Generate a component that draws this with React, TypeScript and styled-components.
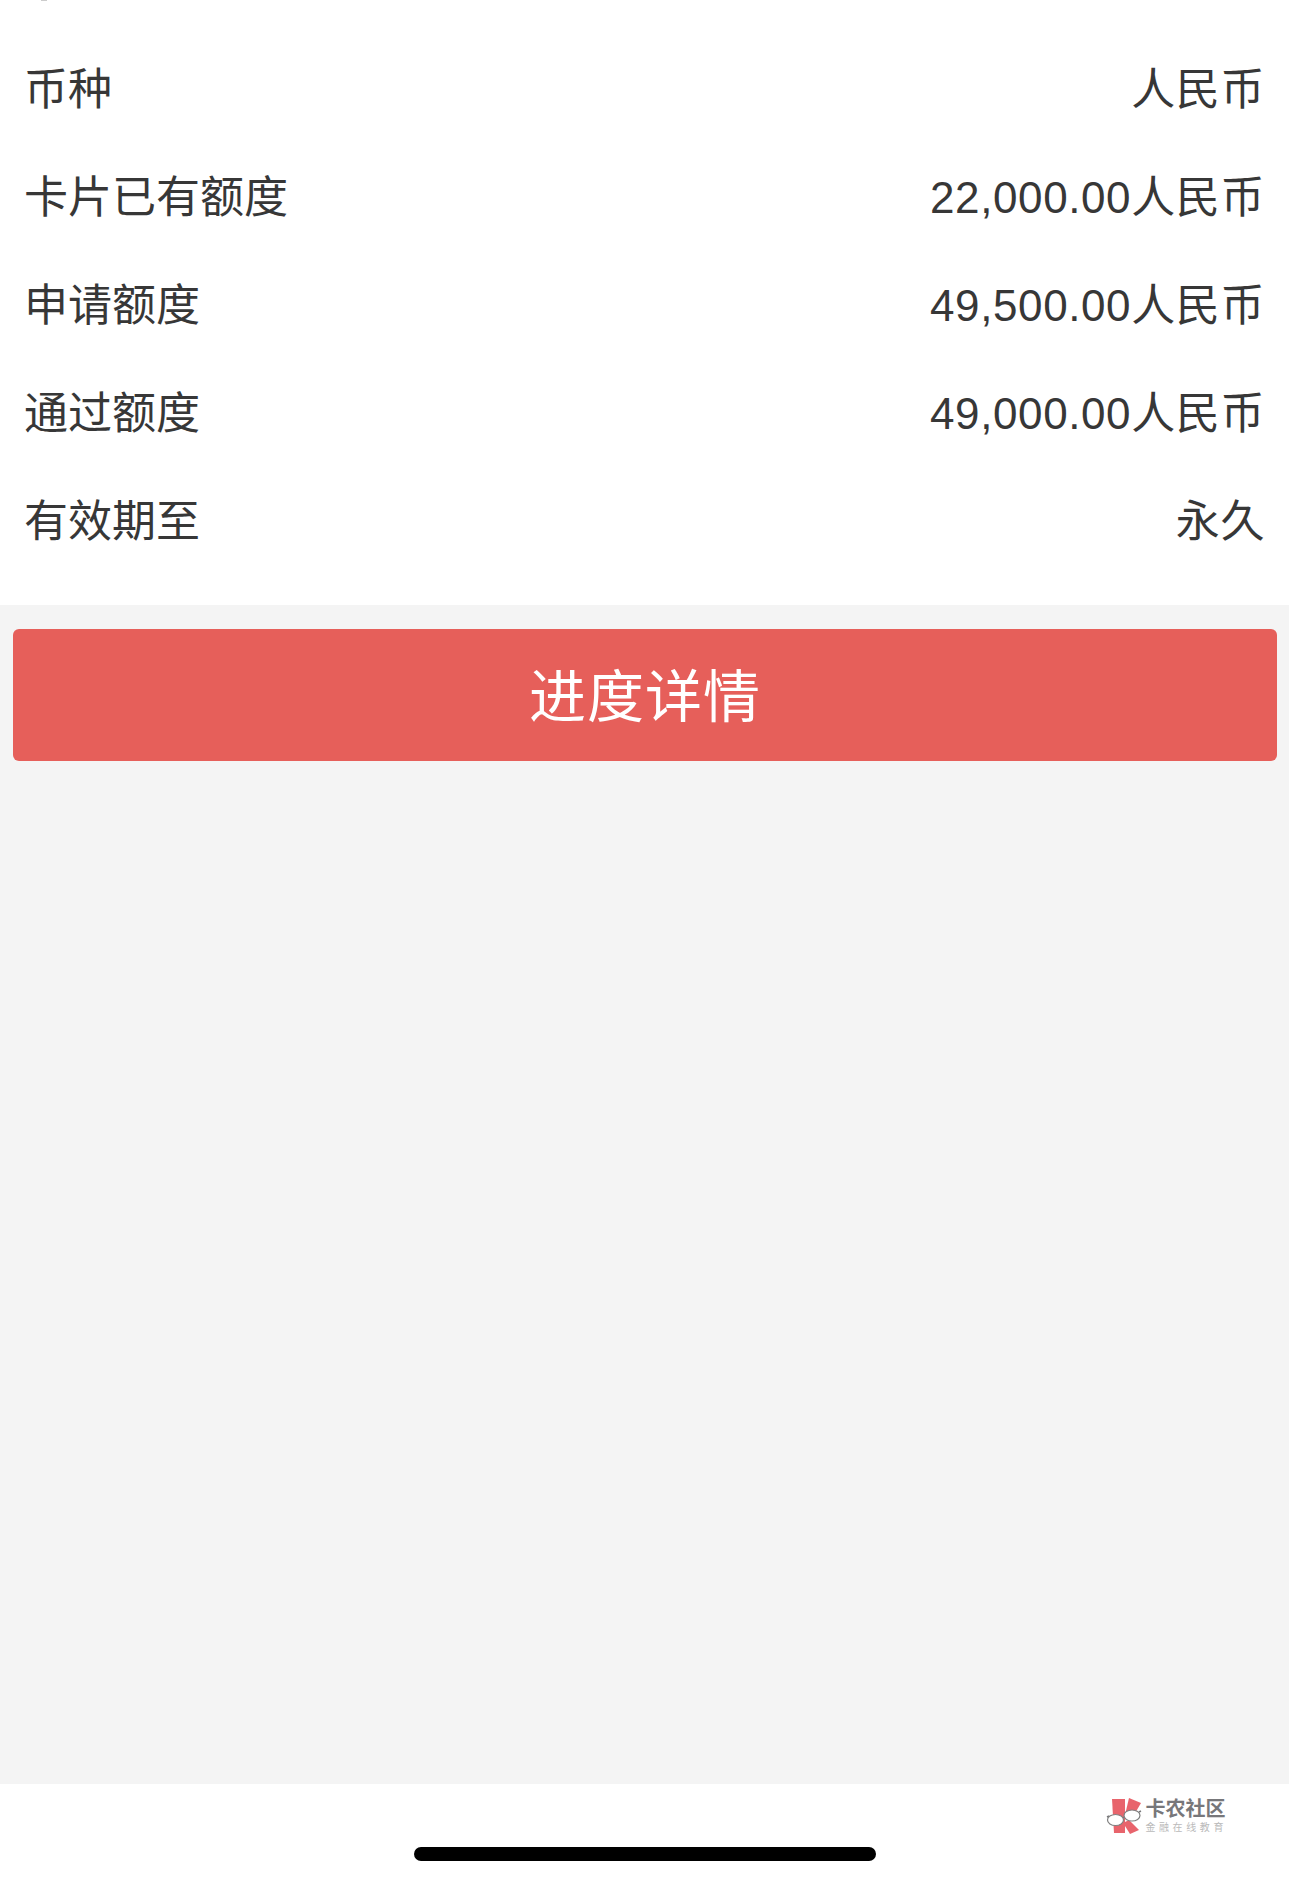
import React from "react";
import styled, { createGlobalStyle } from "styled-components";

const GlobalStyle = createGlobalStyle`
  html, body {
    margin: 0;
    padding: 0;
    background: #f4f4f4;
  }
  * {
    box-sizing: border-box;
  }
`;

const Page = styled.div`
  position: relative;
  width: 1289px;
  height: 1886px;
  display: flex;
  flex-direction: column;
  overflow: hidden;
  font-family: "Liberation Sans", "Noto Sans CJK SC", sans-serif;
`;

// tail of the row that was cut off by the top of the screenshot
const CutOffTail = styled.span`
  position: absolute;
  top: 0;
  left: 41px;
  width: 6px;
  height: 1px;
  background: #cccccc;
`;

const InfoCard = styled.section`
  height: 605px;
  padding: 32px 24px 0 24px;
  background: #ffffff;
`;

const InfoRow = styled.div`
  height: 108px;
  display: flex;
  justify-content: space-between;
  align-items: center;
  font-size: 44px;
  color: #373737;
`;

const Amount = styled.span`
  letter-spacing: 0.6px;
`;

const Body = styled.main`
  flex: 1;
  padding: 24px 12px 0 13px;
  background: #f4f4f4;
`;

const DetailButton = styled.button`
  width: 100%;
  height: 132px;
  padding: 0 0 6px;
  border: 0;
  border-radius: 6px;
  background: #e65f5a;
  color: #ffffff;
  font-family: inherit;
  font-size: 57px;
  letter-spacing: 1px;
`;

const Footer = styled.footer`
  height: 102px;
  display: flex;
  flex-direction: column;
  align-items: center;
  padding-top: 14px;
  background: #ffffff;
`;

const Watermark = styled.div`
  align-self: flex-end;
  display: flex;
  align-items: center;
  gap: 3px;
  margin-right: 62px;
`;

const WatermarkText = styled.div`
  display: flex;
  flex-direction: column;
  gap: 2px;
`;

const WatermarkTitle = styled.span`
  font-size: 20px;
  line-height: 21px;
  font-weight: 700;
  color: #77777a;
`;

const WatermarkSub = styled.span`
  font-size: 10px;
  line-height: 11px;
  letter-spacing: 3.6px;
  color: #bababa;
`;

const HomeIndicator = styled.div`
  width: 462px;
  height: 14px;
  margin-top: 13px;
  border-radius: 7px;
  background: #000000;
`;

const LogoMark = () => (
  <svg width="36" height="36" viewBox="0 0 36 36" aria-hidden="true">
    <path d="M6 1h13v14l0 20H8z" fill="#e8646c" />
    <path d="M23 0l12 5-7 12h-9z" fill="#e8646c" />
    <path d="M19 24l4-2 10 10-9 4-5-8z" fill="#e8646c" />
    <path d="M1 19l2-1M17 20l1-1M33 14l2-1" fill="none" stroke="#77777a" strokeWidth="1.5" />
    <ellipse cx="9.5" cy="22" rx="8" ry="5.5" fill="#ffffff" stroke="#808080" strokeWidth="1.2" />
    <ellipse cx="26" cy="17.5" rx="8" ry="5.5" fill="#ffffff" stroke="#808080" strokeWidth="1.2" />
  </svg>
);

const rows = [
  { label: "币种", value: "人民币" },
  { label: "卡片已有额度", value: "22,000.00人民币" },
  { label: "申请额度", value: "49,500.00人民币" },
  { label: "通过额度", value: "49,000.00人民币" },
  { label: "有效期至", value: "永久" },
];

export default function App() {
  return (
    <Page>
      <GlobalStyle />
      <CutOffTail />
      <InfoCard>
        {rows.map((row) => (
          <InfoRow key={row.label}>
            <span>{row.label}</span>
            <Amount>{row.value}</Amount>
          </InfoRow>
        ))}
      </InfoCard>
      <Body>
        <DetailButton>进度详情</DetailButton>
      </Body>
      <Footer>
        <Watermark>
          <LogoMark />
          <WatermarkText>
            <WatermarkTitle>卡农社区</WatermarkTitle>
            <WatermarkSub>金融在线教育</WatermarkSub>
          </WatermarkText>
        </Watermark>
        <HomeIndicator />
      </Footer>
    </Page>
  );
}
